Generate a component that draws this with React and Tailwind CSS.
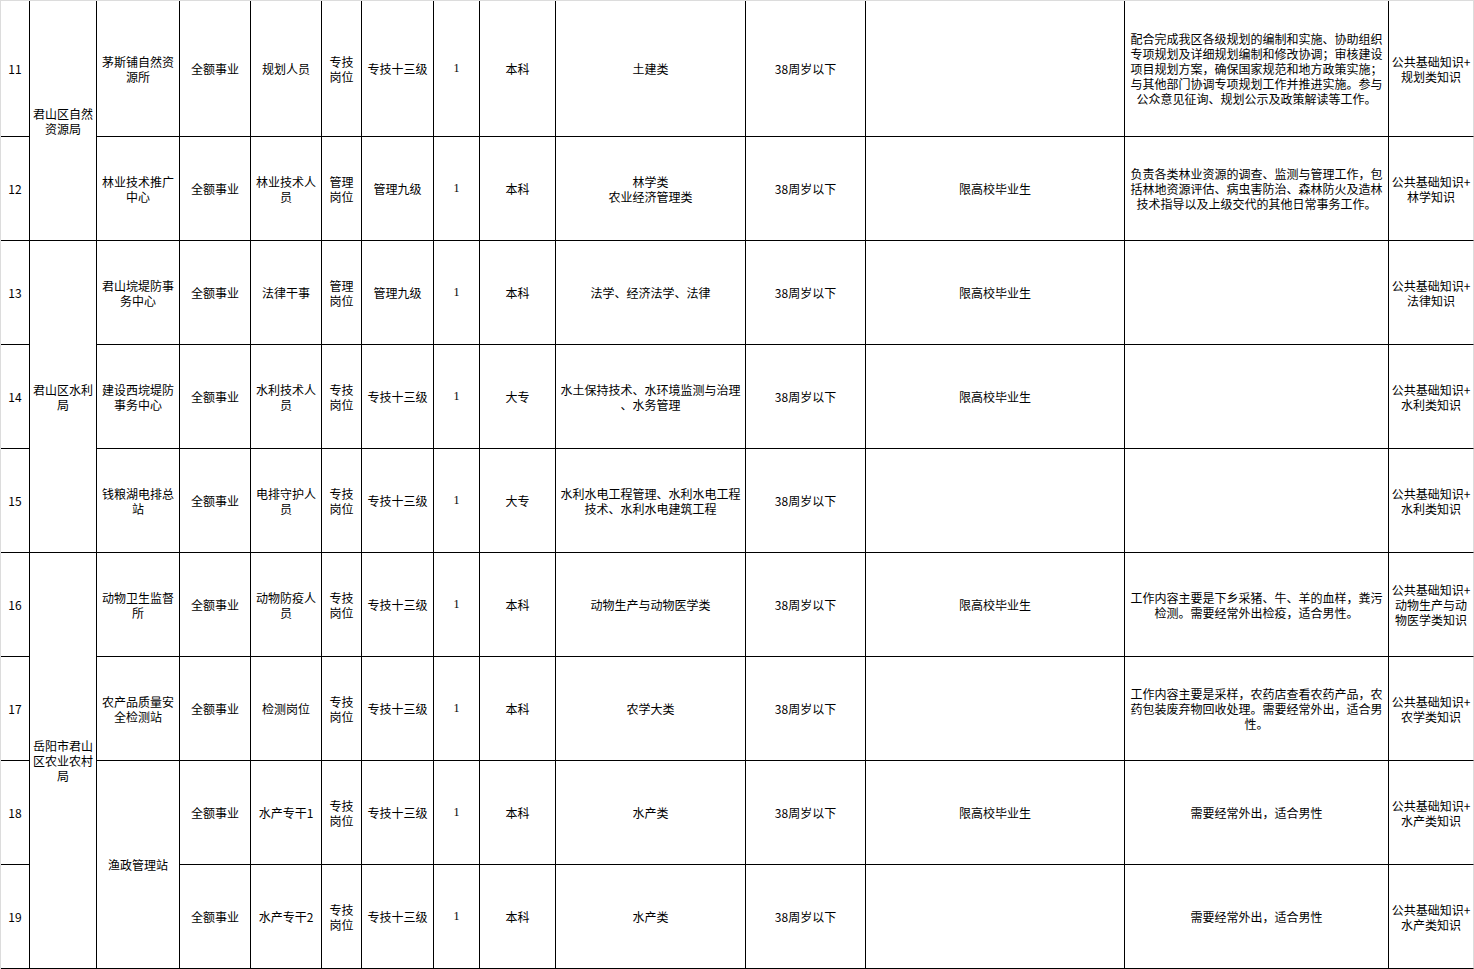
import React from "react";

const F = { fontFamily: '"Noto Sans CJK SC", "Noto Sans", sans-serif' };

const td = "border-r border-b border-black text-center align-middle text-[12px] leading-[15px] text-black whitespace-pre-line p-0";

function Num({ n }) {
  return <td className={td + " text-[11px]"}>{n}</td>;
}

const rows = [
  {
    n: 11, h: "h-[136px]",
    dept: { t: "君山区自然\n资源局", span: 2 },
    unit: { t: "茅斯铺自然资\n源所", span: 1 },
    c: ["全额事业", "规划人员", "专技\n岗位", "专技十三级", "1", "本科", "土建类", "38周岁以下", ""],
    desc: "配合完成我区各级规划的编制和实施、协助组织\n专项规划及详细规划编制和修改协调；审核建设\n项目规划方案，确保国家规范和地方政策实施；\n与其他部门协调专项规划工作并推进实施。参与\n公众意见征询、规划公示及政策解读等工作。",
    exam: "公共基础知识+\n规划类知识",
  },
  {
    n: 12,
    unit: { t: "林业技术推广\n中心", span: 1 },
    c: ["全额事业", "林业技术人\n员", "管理\n岗位", "管理九级", "1", "本科", "林学类\n农业经济管理类", "38周岁以下", "限高校毕业生"],
    desc: "负责各类林业资源的调查、监测与管理工作，包\n括林地资源评估、病虫害防治、森林防火及造林\n技术指导以及上级交代的其他日常事务工作。",
    exam: "公共基础知识+\n林学知识",
  },
  {
    n: 13,
    dept: { t: "君山区水利\n局", span: 3 },
    unit: { t: "君山垸堤防事\n务中心", span: 1 },
    c: ["全额事业", "法律干事", "管理\n岗位", "管理九级", "1", "本科", "法学、经济法学、法律", "38周岁以下", "限高校毕业生"],
    desc: "",
    exam: "公共基础知识+\n法律知识",
  },
  {
    n: 14,
    unit: { t: "建设西垸堤防\n事务中心", span: 1 },
    c: ["全额事业", "水利技术人\n员", "专技\n岗位", "专技十三级", "1", "大专", "水土保持技术、水环境监测与治理\n、水务管理", "38周岁以下", "限高校毕业生"],
    desc: "",
    exam: "公共基础知识+\n水利类知识",
  },
  {
    n: 15,
    unit: { t: "钱粮湖电排总\n站", span: 1 },
    c: ["全额事业", "电排守护人\n员", "专技\n岗位", "专技十三级", "1", "大专", "水利水电工程管理、水利水电工程\n技术、水利水电建筑工程", "38周岁以下", ""],
    desc: "",
    exam: "公共基础知识+\n水利类知识",
  },
  {
    n: 16,
    dept: { t: "岳阳市君山\n区农业农村\n局", span: 4 },
    unit: { t: "动物卫生监督\n所", span: 1 },
    c: ["全额事业", "动物防疫人\n员", "专技\n岗位", "专技十三级", "1", "本科", "动物生产与动物医学类", "38周岁以下", "限高校毕业生"],
    desc: "工作内容主要是下乡采猪、牛、羊的血样，粪污\n检测。需要经常外出检疫，适合男性。",
    exam: "公共基础知识+\n动物生产与动\n物医学类知识",
  },
  {
    n: 17,
    unit: { t: "农产品质量安\n全检测站", span: 1 },
    c: ["全额事业", "检测岗位", "专技\n岗位", "专技十三级", "1", "本科", "农学大类", "38周岁以下", ""],
    desc: "工作内容主要是采样，农药店查看农药产品，农\n药包装废弃物回收处理。需要经常外出，适合男\n性。",
    exam: "公共基础知识+\n农学类知识",
  },
  {
    n: 18,
    unit: { t: "渔政管理站", span: 2 },
    c: ["全额事业", "水产专干1", "专技\n岗位", "专技十三级", "1", "本科", "水产类", "38周岁以下", "限高校毕业生"],
    desc: "需要经常外出，适合男性",
    exam: "公共基础知识+\n水产类知识",
  },
  {
    n: 19,
    c: ["全额事业", "水产专干2", "专技\n岗位", "专技十三级", "1", "本科", "水产类", "38周岁以下", ""],
    desc: "需要经常外出，适合男性",
    exam: "公共基础知识+\n水产类知识",
  },
];

export default function App() {
  return (
    <div className="w-[1474px] h-[969px] overflow-hidden bg-white border-l border-t border-[#dcdcdc]" style={F}>
      <table className="table-fixed border-separate border-spacing-0 w-[1473px]">
        <colgroup>
          <col className="w-[29px]" />
          <col className="w-[67px]" />
          <col className="w-[83px]" />
          <col className="w-[71px]" />
          <col className="w-[71px]" />
          <col className="w-[40px]" />
          <col className="w-[72px]" />
          <col className="w-[46px]" />
          <col className="w-[76px]" />
          <col className="w-[190px]" />
          <col className="w-[120px]" />
          <col className="w-[259px]" />
          <col className="w-[264px]" />
          <col className="w-[85px]" />
        </colgroup>
        <tbody>
          {rows.map((r) => (
            <tr key={r.n} className={r.h || "h-[104px]"}>
              <Num n={r.n} />
              {r.dept && (
                <td rowSpan={r.dept.span} className={td}>
                  {r.dept.t}
                </td>
              )}
              {r.unit && (
                <td rowSpan={r.unit.span} className={td}>
                  {r.unit.t}
                </td>
              )}
              {r.c.map((t, i) => (
                <td
                  key={i}
                  className={
                    td + (i === 4 ? " text-[11px]" : "") + (i === 7 ? " text-[11.5px]" : "")
                  }
                  style={i === 4 ? { fontFamily: '"Liberation Serif", serif' } : undefined}
                >
                  {t}
                </td>
              ))}
              <td className={td}>{r.desc}</td>
              <td className={td.replace("border-r border-b border-black", "border-r border-b border-r-[#dcdcdc] border-b-black")}>
                {r.exam}
              </td>
            </tr>
          ))}
        </tbody>
      </table>
    </div>
  );
}
